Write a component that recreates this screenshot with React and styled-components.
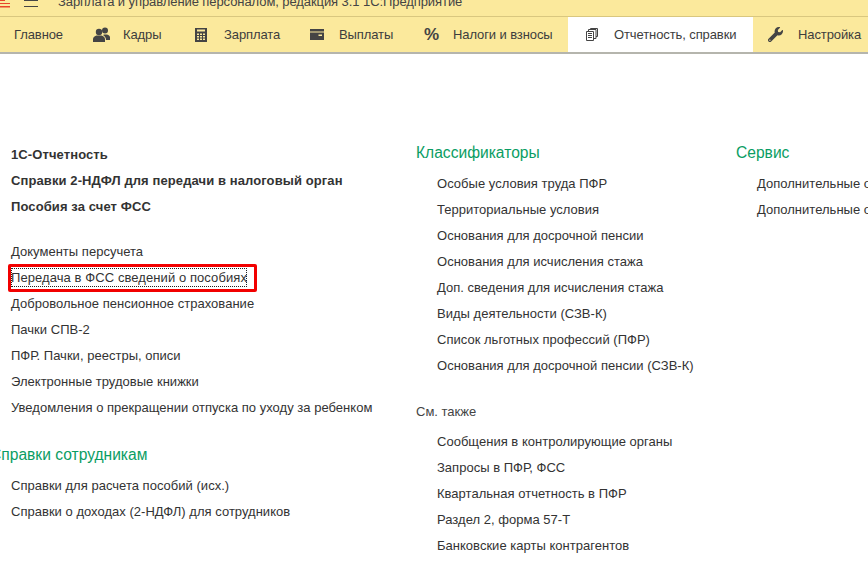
import styled, { createGlobalStyle } from "styled-components";
import { FaWrench } from "react-icons/fa";

const GlobalStyle = createGlobalStyle`
  html, body {
    margin: 0;
    padding: 0;
    background: #fff;
    overflow: hidden;
  }
  body {
    font-family: "Liberation Sans", Arial, sans-serif;
    font-size: 13px;
    color: #333;
  }
`;

const Page = styled.div`
  width: 868px;
  height: 576px;
  overflow: hidden;
`;

const TitleBar = styled.div`
  height: 16px;
  display: flex;
  align-items: flex-start;
  background: #fbe99c;
  border-bottom: 1px solid #d9c77f;
  overflow: hidden;
`;

const Logo = styled.svg`
  width: 11px;
  height: 10px;
  flex: none;
`;

const Burger = styled.svg`
  width: 14px;
  height: 10px;
  margin-left: 13px;
  flex: none;
`;

const WindowTitle = styled.div`
  margin-left: 20px;
  margin-top: -6px;
  font-size: 13px;
  line-height: 15px;
  letter-spacing: -0.08px;
  white-space: nowrap;
  color: #444;
`;

const TabBar = styled.nav`
  height: 35px;
  display: flex;
  background: #fbe99c;
  border-bottom: 2px solid #b5b5ad;
  overflow: hidden;
`;

const Tab = styled.div`
  display: flex;
  align-items: center;
  flex: none;
  width: ${(p) => p.$width}px;
  padding-left: ${(p) => p.$pad}px;
  box-sizing: border-box;
  background: ${(p) => (p.$active ? "#fff" : "transparent")};
  font-size: 13px;
  letter-spacing: -0.1px;
  white-space: nowrap;
  color: #3d3d3d;
`;

const TabIcon = styled.span`
  width: ${(p) => p.$gap}px;
  flex: none;
  display: flex;
  align-items: center;
  color: #444;
`;

const Percent = styled.span`
  font-size: 17px;
  font-weight: 700;
  color: #444;
`;

const Columns = styled.main`
  display: grid;
  grid-template-columns: 426px 320px 1fr;
  margin-left: -10px;
  padding-top: 86px;
`;

const Column = styled.section`
  display: flex;
  flex-direction: column;
  min-width: 0;
  white-space: nowrap;
  padding-top: ${(p) => p.$top || 0}px;
`;

const Heading = styled.h2`
  margin: ${(p) => p.$top || 0}px 0 4px;
  font-size: 15.6px;
  line-height: 26px;
  font-weight: 400;
  color: #0a9d63;
`;

const SubHeading = styled.h3`
  margin: 21px 0 3px;
  font-size: 13px;
  line-height: 26px;
  font-weight: 400;
  color: #444;
`;

const Group = styled.div`
  display: flex;
  flex-direction: column;
  padding-left: 21px;
  margin-top: ${(p) => p.$top || 0}px;
`;

const Item = styled.div`
  height: 26px;
  display: flex;
  align-items: center;
  font-size: 13px;
  letter-spacing: ${(p) => (p.$bold ? "0.1px" : "0.02px")};
  font-weight: ${(p) => (p.$bold ? 700 : 400)};
  color: #333;
`;

const Marked = styled.div`
  position: relative;
  display: inline-block;
  line-height: 19px;
  letter-spacing: 0.08px;
  outline: 1px dotted #222;
  outline-offset: -1px;

  &::after {
    content: "";
    position: absolute;
    left: -3px;
    right: -10px;
    top: -4px;
    bottom: -5px;
    border: 3px solid #f20000;
    border-radius: 2px;
  }
`;

const tabs = [
  { label: "Главное", width: 76, pad: 14 },
  { label: "Кадры", width: 100, pad: 17, gap: 30, icon: "users" },
  { label: "Зарплата", width: 115, pad: 19, gap: 29, icon: "calc" },
  { label: "Выплаты", width: 114, pad: 19, gap: 29, icon: "card" },
  { label: "Налоги и взносы", width: 163, pad: 19, gap: 29, icon: "percent" },
  { label: "Отчетность, справки", width: 185, pad: 18, gap: 28, icon: "docs", active: true },
  { label: "Настройка", width: 115, pad: 15, gap: 30, icon: "wrench" },
];

const TabGlyph = ({ name }) => {
  if (name === "users") {
    return (
      <svg width="17" height="15" viewBox="0 0 17 15" fill="#444">
        <circle cx="6" cy="5" r="3.2" />
        <circle cx="12" cy="3.500" r="3" />
        <path d="M0 15v-3c0-2 2-3 3.500-3.500h5C10 9 12 10 12 12v3zM11 7.500h3c2 .5 3 1.500 3 3V13h-4c0-2-1-4-3-5z" />
      </svg>
    );
  }
  if (name === "calc") {
    return (
      <svg width="12" height="14" viewBox="0 0 12 14" fill="#444">
        <path
          fillRule="evenodd"
          d="M0 0h12v14H0zM2 1.500v2h8v-2zM2 5.500v1.500h2V5.500zm3 0v1.500h2V5.500zm3 0v1.500h2V5.500zM2 8v1.500h2V8zm3 0v1.500h2V8zm3 0v1.500h2V8zM2 10.500V12h2v-1.500zm3 0V12h2v-1.500zm3 0V12h2v-1.500z"
        />
      </svg>
    );
  }
  if (name === "card") {
    return (
      <svg width="14" height="11" viewBox="0 0 14 11" fill="#444">
        <path d="M0 0h14v2.500H0zM0 3.500h14V11H0zM8.500 5.500V7H12V5.500z" fillRule="evenodd" />
      </svg>
    );
  }
  if (name === "percent") return <Percent>%</Percent>;
  if (name === "docs") {
    return (
      <svg width="12" height="13" viewBox="0 0 12 13" fill="none" stroke="#444">
        <path d="M.5 3.500h7v9h-7zM2 5.500h4M2 7.500h4M2 9.500h4M2.500 3V1.500h7.500v9H8M4.500 1V.5h7v8H10" />
      </svg>
    );
  }
  if (name === "wrench") return <FaWrench size={15} />;
  return null;
};

const App = () => {
  return (
    <Page>
      <GlobalStyle />
      <TitleBar>
        <Logo viewBox="0 0 11 10">
          <path d="M0 0h5v1H0zM0 3h10v1H0zM0 6h10v1.500H0z" fill="#e8452c" />
        </Logo>
        <Burger viewBox="0 0 14 10">
          <path d="M0 0h14v1H0zM0 6h14v1H0z" fill="#444" />
        </Burger>
        <WindowTitle>Зарплата и управление персоналом, редакция 3.1 1С:Предприятие</WindowTitle>
      </TitleBar>

      <TabBar>
        {tabs.map((t) => (
          <Tab key={t.label} $width={t.width} $pad={t.pad} $active={t.active}>
            {t.icon && (
              <TabIcon $gap={t.gap}>
                <TabGlyph name={t.icon} />
              </TabIcon>
            )}
            {t.label}
          </Tab>
        ))}
      </TabBar>

      <Columns>
        <Column $top={1}>
          <Group>
            <Item $bold>1С-Отчетность</Item>
            <Item $bold>Справки 2-НДФЛ для передачи в налоговый орган</Item>
            <Item $bold>Пособия за счет ФСС</Item>
          </Group>
          <Group $top={19}>
            <Item>Документы персучета</Item>
            <Item>
              <Marked>Передача в ФСС сведений о пособиях</Marked>
            </Item>
            <Item>Добровольное пенсионное страхование</Item>
            <Item>Пачки СПВ-2</Item>
            <Item>ПФР. Пачки, реестры, описи</Item>
            <Item>Электронные трудовые книжки</Item>
            <Item>Уведомления о прекращении отпуска по уходу за ребенком</Item>
          </Group>
          <Heading $top={22}>Справки сотрудникам</Heading>
          <Group>
            <Item>Справки для расчета пособий (исх.)</Item>
            <Item>Справки о доходах (2-НДФЛ) для сотрудников</Item>
          </Group>
        </Column>

        <Column>
          <Heading>Классификаторы</Heading>
          <Group>
            <Item>Особые условия труда ПФР</Item>
            <Item>Территориальные условия</Item>
            <Item>Основания для досрочной пенсии</Item>
            <Item>Основания для исчисления стажа</Item>
            <Item>Доп. сведения для исчисления стажа</Item>
            <Item>Виды деятельности (СЗВ-К)</Item>
            <Item>Список льготных профессий (ПФР)</Item>
            <Item>Основания для досрочной пенсии (СЗВ-К)</Item>
          </Group>
          <SubHeading>См. также</SubHeading>
          <Group>
            <Item>Сообщения в контролирующие органы</Item>
            <Item>Запросы в ПФР, ФСС</Item>
            <Item>Квартальная отчетность в ПФР</Item>
            <Item>Раздел 2, форма 57-Т</Item>
            <Item>Банковские карты контрагентов</Item>
          </Group>
        </Column>

        <Column>
          <Heading>Сервис</Heading>
          <Group>
            <Item>Дополнительные отчеты</Item>
            <Item>Дополнительные обработки</Item>
          </Group>
        </Column>
      </Columns>
    </Page>
  );
};

export default App;
